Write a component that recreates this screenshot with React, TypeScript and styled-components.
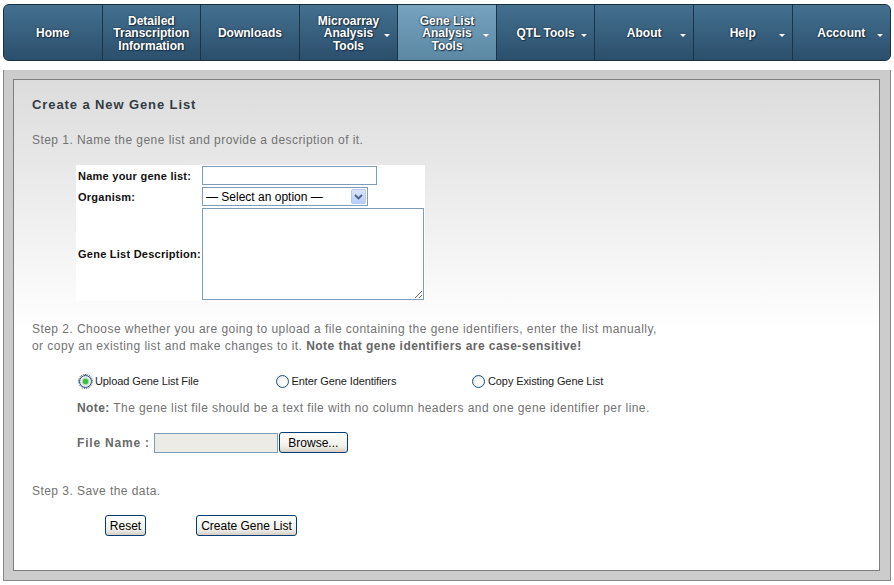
import React from 'react'
import styled, { createGlobalStyle } from 'styled-components'

interface NavEntry {
  label: string[]
  menu?: boolean
  active?: boolean
}

const navEntries: NavEntry[] = [
  { label: ['Home'] },
  { label: ['Detailed', 'Transcription', 'Information'] },
  { label: ['Downloads'] },
  { label: ['Microarray', 'Analysis', 'Tools'], menu: true },
  { label: ['Gene List', 'Analysis', 'Tools'], menu: true, active: true },
  { label: ['QTL Tools'], menu: true },
  { label: ['About'], menu: true },
  { label: ['Help'], menu: true },
  { label: ['Account'], menu: true },
]

const GlobalStyle = createGlobalStyle`
  html, body {
    margin: 0;
    padding: 0;
    background: #ffffff;
    font-family: "Liberation Sans", Arial, sans-serif;
  }
`

export default function App(): JSX.Element {
  return (
    <Page>
      <GlobalStyle />
      <NavBar>
        {navEntries.map((entry, idx) => (
          <NavItem key={idx} $active={entry.active}>
            <NavLabel>
              {entry.label.map((line, i) => (
                <span key={i}>{line}</span>
              ))}
            </NavLabel>
            {entry.menu ? <MenuArrow /> : null}
          </NavItem>
        ))}
      </NavBar>

      <Frame>
        <Panel>
          <Heading>Create a New Gene List</Heading>
          <StepText>Step 1. Name the gene list and provide a description of it.</StepText>

          <FormTable>
            <tbody>
              <tr>
                <LabelCell>Name your gene list:</LabelCell>
                <FieldCell>
                  <TextInput type="text" />
                </FieldCell>
              </tr>
              <tr>
                <LabelCell>Organism:</LabelCell>
                <FieldCell>
                  <SelectBox>
                    <SelectText>— Select an option —</SelectText>
                    <SelectButton>
                      <svg width="9" height="6" viewBox="0 0 9 6">
                        <path d="M1 1 L4.5 4.5 L8 1" fill="none" stroke="#4d6185" strokeWidth="1.8" />
                      </svg>
                    </SelectButton>
                  </SelectBox>
                </FieldCell>
              </tr>
              <tr>
                <LabelCell>Gene List Description:</LabelCell>
                <FieldCell>
                  <DescriptionArea />
                </FieldCell>
              </tr>
            </tbody>
          </FormTable>

          <StepText $top={20}>
            Step 2. Choose whether you are going to upload a file containing the gene identifiers, enter the list manually,
            <br />
            or copy an existing list and make changes to it. <strong>Note that gene identifiers are case-sensitive!</strong>
          </StepText>

          <RadioRow>
            <RadioOption>
              <RadioDot $checked />
              Upload Gene List File
            </RadioOption>
            <RadioOption>
              <RadioDot />
              Enter Gene Identifiers
            </RadioOption>
            <RadioOption>
              <RadioDot />
              Copy Existing Gene List
            </RadioOption>
          </RadioRow>

          <NoteText>
            <strong>Note:</strong> The gene list file should be a text file with no column headers and one gene identifier per line.
          </NoteText>

          <FileRow>
            <FileLabel>File Name :</FileLabel>
            <FileInput />
            <XpButton $width={69}>Browse...</XpButton>
          </FileRow>

          <StepText $top={30}>Step 3. Save the data.</StepText>

          <ButtonRow>
            <XpButton $width={41}>Reset</XpButton>
            <XpButton $width={101}>Create Gene List</XpButton>
          </ButtonRow>
        </Panel>
      </Frame>
    </Page>
  )
}

const Page = styled.div`
  width: 894px;
  padding: 4px 3px 0 3px;
  box-sizing: border-box;
`

const NavBar = styled.nav`
  display: flex;
  height: 57px;
  box-sizing: border-box;
  border: 1px solid #1a2f41;
  border-radius: 6px;
  overflow: hidden;
  background: linear-gradient(#44708f, #2b4f6d);
`

const NavItem = styled.div<{ $active?: boolean }>`
  position: relative;
  flex: 1;
  display: flex;
  align-items: center;
  justify-content: center;
  padding-top: 2px;
  border-left: 1px solid #1c3447;
  background: ${(p) => (p.$active ? 'linear-gradient(#77a2c0, #5b88a3)' : 'transparent')};
  &:first-child {
    border-left: none;
  }
`

const NavLabel = styled.div`
  display: flex;
  flex-direction: column;
  align-items: center;
  color: #ffffff;
  font-size: 12px;
  font-weight: bold;
  line-height: 12.5px;
  text-shadow: 0 0 2px #16293a, 1px 1px 1px #1a3145;
`

const MenuArrow = styled.span`
  position: absolute;
  right: 7px;
  top: 29px;
  width: 0;
  height: 0;
  border-left: 3px solid transparent;
  border-right: 3px solid transparent;
  border-top: 3px solid #ffffff;
`

const Frame = styled.div`
  margin-top: 9px;
  height: 511px;
  box-sizing: border-box;
  padding: 9px 10px 9px 9px;
  background: #cccccc;
  border-left: 1px solid #888888;
  border-bottom: 1px solid #888888;
  border-right: 1px solid #888888;
`

const Panel = styled.div`
  height: 100%;
  box-sizing: border-box;
  padding: 17px 18px 0 18px;
  border: 1px solid #7e7e7e;
  background: linear-gradient(#dcdcdc 0px, #ffffff 250px);
`

const Heading = styled.h1`
  margin: 0;
  font-size: 13px;
  line-height: 16px;
  letter-spacing: 0.9px;
  font-weight: bold;
  color: #343c44;
`

const StepText = styled.p<{ $top?: number }>`
  margin: ${(p) => p.$top ?? 19}px 0 0 0;
  font-size: 12px;
  line-height: 17px;
  letter-spacing: 0.45px;
  color: #737373;
  strong {
    font-weight: bold;
    color: #666666;
  }
`

const FormTable = styled.table`
  margin: 16px 0 0 44px;
  width: 349px;
  border-collapse: collapse;
  background: #ffffff;
`

const LabelCell = styled.td`
  width: 124px;
  padding: 1px 0 1px 2px;
  font-size: 11px;
  font-weight: bold;
  letter-spacing: 0.25px;
  color: #111111;
  white-space: nowrap;
  vertical-align: middle;
`

const FieldCell = styled.td`
  padding: 1px 0;
  vertical-align: middle;
  line-height: 0;
`

const TextInput = styled.input`
  width: 175px;
  height: 19px;
  box-sizing: border-box;
  border: 1px solid #7f9db9;
  margin: 0;
  padding: 0 2px;
  font-family: "Liberation Sans", Arial, sans-serif;
`

const SelectBox = styled.div`
  display: flex;
  align-items: center;
  width: 166px;
  height: 19px;
  box-sizing: border-box;
  border: 1px solid #7f9db9;
  background: #ffffff;
  line-height: normal;
`

const SelectText = styled.span`
  flex: 1;
  padding-left: 3px;
  font-size: 12px;
  color: #000000;
  white-space: nowrap;
`

const SelectButton = styled.span`
  display: flex;
  align-items: center;
  justify-content: center;
  width: 15px;
  height: 15px;
  margin-right: 1px;
  border: 1px solid #b7c9f3;
  border-radius: 2px;
  box-sizing: border-box;
  background: linear-gradient(#dbe6fd, #b7cdfa);
`

const DescriptionArea = styled.textarea`
  display: block;
  width: 222px;
  height: 92px;
  box-sizing: border-box;
  margin: 0;
  border: 1px solid #7f9db9;
  font-family: "Liberation Sans", Arial, sans-serif;
`

const RadioRow = styled.div`
  display: grid;
  grid-template-columns: 196.5px 196.5px 196.5px;
  margin: 19px 0 0 47px;
`

const RadioOption = styled.label`
  display: flex;
  align-items: center;
  gap: 3px;
  font-size: 11px;
  letter-spacing: -0.1px;
  color: #222222;
  line-height: 14px;
`

const RadioDot = styled.span<{ $checked?: boolean }>`
  display: inline-block;
  width: 13px;
  height: 13px;
  box-sizing: border-box;
  border-radius: 50%;
  border: 1px solid #1c5180;
  background: ${(p) =>
    p.$checked
      ? 'radial-gradient(circle, #3fbf3f 0 2.5px, #a6dfa6 3px, #e6e9ee 4px, #dde1e8 100%)'
      : 'radial-gradient(circle at 60% 60%, #ffffff 0, #f4f4f0 50%, #d8dcd8 100%)'};
  outline: ${(p) => (p.$checked ? '1px dotted #555555' : 'none')};
`

const NoteText = styled.p`
  margin: 12px 0 0 45px;
  font-size: 12px;
  line-height: 17px;
  letter-spacing: 0.42px;
  color: #737373;
  strong {
    color: #666666;
  }
`

const FileRow = styled.div`
  display: flex;
  align-items: center;
  margin: 15px 0 0 45px;
`

const FileLabel = styled.span`
  margin-right: 4px;
  font-size: 12px;
  font-weight: bold;
  letter-spacing: 0.8px;
  color: #6a6a6a;
`

const FileInput = styled.span`
  display: inline-block;
  width: 124px;
  height: 20px;
  box-sizing: border-box;
  border: 1px solid #7f9db9;
  background: #ecebe6;
`

const XpButton = styled.button<{ $width: number }>`
  width: ${(p) => p.$width}px;
  height: 21px;
  box-sizing: border-box;
  margin: 0 0 0 1px;
  padding: 0;
  border: 1px solid #003c74;
  border-radius: 3px;
  background: linear-gradient(#ffffff, #f0f0ea 70%, #d6d0c5);
  font-family: "Liberation Sans", Arial, sans-serif;
  font-size: 12px;
  color: #000000;
`

const ButtonRow = styled.div`
  display: flex;
  gap: 49px;
  margin: 15px 0 0 72px;
`
